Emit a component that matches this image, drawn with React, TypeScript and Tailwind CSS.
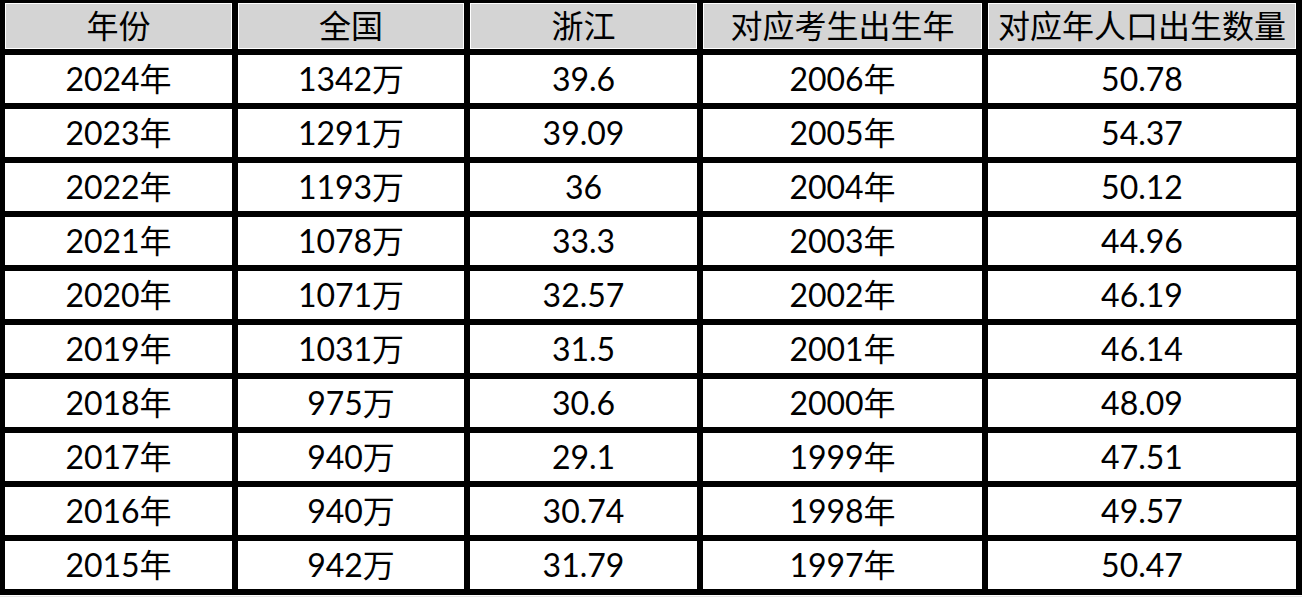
const headers = ["年份", "全国", "浙江", "对应考生出生年", "对应年人口出生数量"]

const rows: string[][] = [
  ["2024年", "1342万", "39.6", "2006年", "50.78"],
  ["2023年", "1291万", "39.09", "2005年", "54.37"],
  ["2022年", "1193万", "36", "2004年", "50.12"],
  ["2021年", "1078万", "33.3", "2003年", "44.96"],
  ["2020年", "1071万", "32.57", "2002年", "46.19"],
  ["2019年", "1031万", "31.5", "2001年", "46.14"],
  ["2018年", "975万", "30.6", "2000年", "48.09"],
  ["2017年", "940万", "29.1", "1999年", "47.51"],
  ["2016年", "940万", "30.74", "1998年", "49.57"],
  ["2015年", "942万", "31.79", "1997年", "50.47"],
]

export default function App() {
  return (
    <div
      className="h-[598px] w-[1302px] overflow-hidden bg-white text-black"
      style={{ fontFamily: 'Lato, "Noto Sans CJK SC", sans-serif' }}
    >
      <div className="grid grid-cols-[227px_226px_227px_279px_308px] grid-rows-[46px_repeat(10,48px)] gap-[6px] bg-black pb-[6px] pl-[5px] pr-[6px] pt-[3px]">
        {headers.map((h) => (
          <div
            key={h}
            className="flex items-center justify-center whitespace-nowrap border border-white bg-[#d4d4d4] text-[32px] leading-none"
          >
            {h}
          </div>
        ))}
        {rows.map((r) =>
          r.map((c, i) => (
            <div
              key={r[0] + i}
              className="flex items-center justify-center whitespace-nowrap bg-white text-[32px] leading-none"
            >
              {c}
            </div>
          ))
        )}
      </div>
      <div className="mt-[1px] h-px w-full bg-[#e5e5e5]" />
    </div>
  )
}
